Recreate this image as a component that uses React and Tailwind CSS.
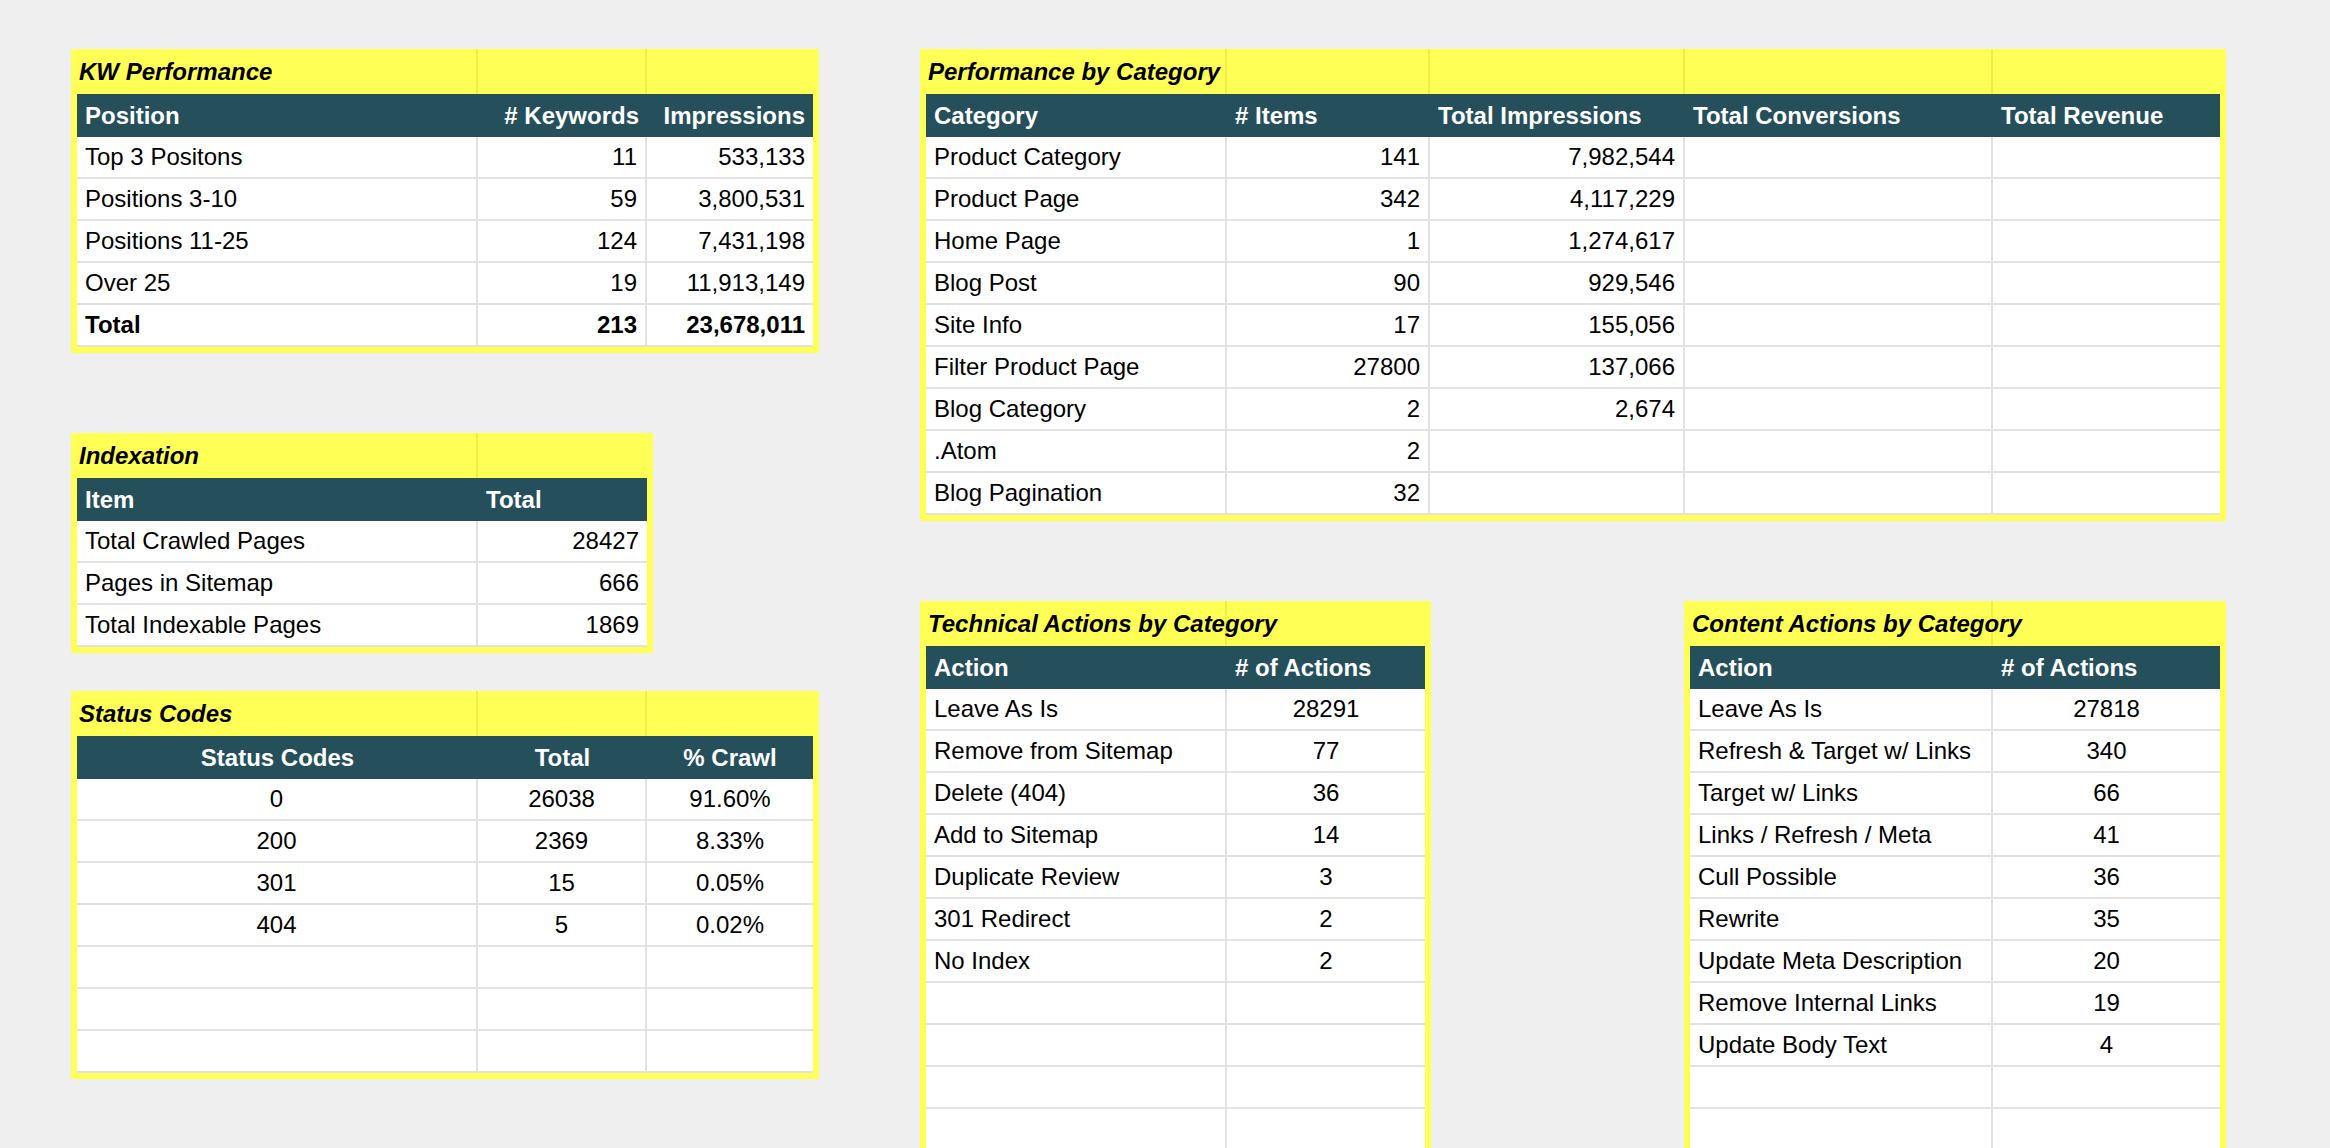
const font = { fontFamily: '"Liberation Sans", Arial, sans-serif' };

function Sheet({ title, widths, headers, rows, align, headAlign, boldLast, empty = 0 }) {
  const all = [...rows, ...Array.from({ length: empty }, () => widths.map(() => ""))];
  const cls = (a) => (a === "r" ? "justify-end text-right" : a === "c" ? "justify-center text-center" : "justify-start");
  return (
    <div className="bg-[#ffff55] p-[6px] pt-0 self-start">
      <div className="flex h-[45px]">
        {widths.map((w, i) => (
          <div key={i} style={{ width: w }} className={`flex items-center px-[2px] ${i < widths.length - 1 ? "border-r-2 border-[#eeee44]" : ""}`}>
            {i === 0 && <span className="text-[24px] font-bold italic text-black whitespace-nowrap">{title}</span>}
          </div>
        ))}
      </div>
      <div className="flex h-[43px] bg-[#25505b]">
        {headers.map((h, i) => (
          <div key={i} style={{ width: widths[i] }} className={`flex items-center px-[8px] text-[24px] font-bold text-white whitespace-nowrap ${cls(headAlign ? headAlign[i] : "l")}`}>
            {h}
          </div>
        ))}
      </div>
      {all.map((r, ri) => (
        <div key={ri} className="flex h-[42px] bg-white border-b-2 border-[#e2e2e2]">
          {r.map((c, ci) => (
            <div
              key={ci}
              style={{ width: widths[ci] }}
              className={`flex items-center px-[8px] text-[24px] text-black whitespace-nowrap overflow-hidden ${ci < r.length - 1 ? "border-r-2 border-[#e2e2e2]" : ""} ${cls(align[ci])} ${boldLast && ri === rows.length - 1 ? "font-bold" : ""}`}
            >
              {c}
            </div>
          ))}
        </div>
      ))}
    </div>
  );
}

export default function App() {
  return (
    <div style={font} className="w-[2330px] h-[1148px] overflow-hidden bg-[#efefef] flex pt-[49px] pl-[71px]">
      <div className="flex flex-col w-[748px]">
        <Sheet
          title="KW Performance"
          widths={[401, 169, 166]}
          headers={["Position", "# Keywords", "Impressions"]}
          headAlign={["l", "r", "r"]}
          align={["l", "r", "r"]}
          boldLast
          rows={[
            ["Top 3 Positons", "11", "533,133"],
            ["Positions 3-10", "59", "3,800,531"],
            ["Positions 11-25", "124", "7,431,198"],
            ["Over 25", "19", "11,913,149"],
            ["Total", "213", "23,678,011"],
          ]}
        />
        <div className="h-[80px]" />
        <Sheet
          title="Indexation"
          widths={[401, 169]}
          headers={["Item", "Total"]}
          align={["l", "r"]}
          rows={[
            ["Total Crawled Pages", "28427"],
            ["Pages in Sitemap", "666"],
            ["Total Indexable Pages", "1869"],
          ]}
        />
        <div className="h-[38px]" />
        <Sheet
          title="Status Codes"
          widths={[401, 169, 166]}
          headers={["Status Codes", "Total", "% Crawl"]}
          headAlign={["c", "c", "c"]}
          align={["c", "c", "c"]}
          empty={3}
          rows={[
            ["0", "26038", "91.60%"],
            ["200", "2369", "8.33%"],
            ["301", "15", "0.05%"],
            ["404", "5", "0.02%"],
          ]}
        />
      </div>
      <div className="ml-[101px] w-[1306px] flex flex-col">
        <Sheet
          title="Performance by Category"
          widths={[301, 203, 255, 308, 227]}
          headers={["Category", "# Items", "Total Impressions", "Total Conversions", "Total Revenue"]}
          align={["l", "r", "r", "r", "r"]}
          rows={[
            ["Product Category", "141", "7,982,544", "", ""],
            ["Product Page", "342", "4,117,229", "", ""],
            ["Home Page", "1", "1,274,617", "", ""],
            ["Blog Post", "90", "929,546", "", ""],
            ["Site Info", "17", "155,056", "", ""],
            ["Filter Product Page", "27800", "137,066", "", ""],
            ["Blog Category", "2", "2,674", "", ""],
            [".Atom", "2", "", "", ""],
            ["Blog Pagination", "32", "", "", ""],
          ]}
        />
        <div className="flex justify-between mt-[80px]">
          <Sheet
            title="Technical Actions by Category"
            widths={[301, 198]}
            headers={["Action", "# of Actions"]}
            align={["l", "c"]}
            empty={4}
            rows={[
              ["Leave As Is", "28291"],
              ["Remove from Sitemap", "77"],
              ["Delete (404)", "36"],
              ["Add to Sitemap", "14"],
              ["Duplicate Review", "3"],
              ["301 Redirect", "2"],
              ["No Index", "2"],
            ]}
          />
          <Sheet
            title="Content Actions by Category"
            widths={[303, 227]}
            headers={["Action", "# of Actions"]}
            align={["l", "c"]}
            empty={2}
            rows={[
              ["Leave As Is", "27818"],
              ["Refresh & Target w/ Links", "340"],
              ["Target w/ Links", "66"],
              ["Links / Refresh / Meta", "41"],
              ["Cull Possible", "36"],
              ["Rewrite", "35"],
              ["Update Meta Description", "20"],
              ["Remove Internal Links", "19"],
              ["Update Body Text", "4"],
            ]}
          />
        </div>
      </div>
    </div>
  );
}
